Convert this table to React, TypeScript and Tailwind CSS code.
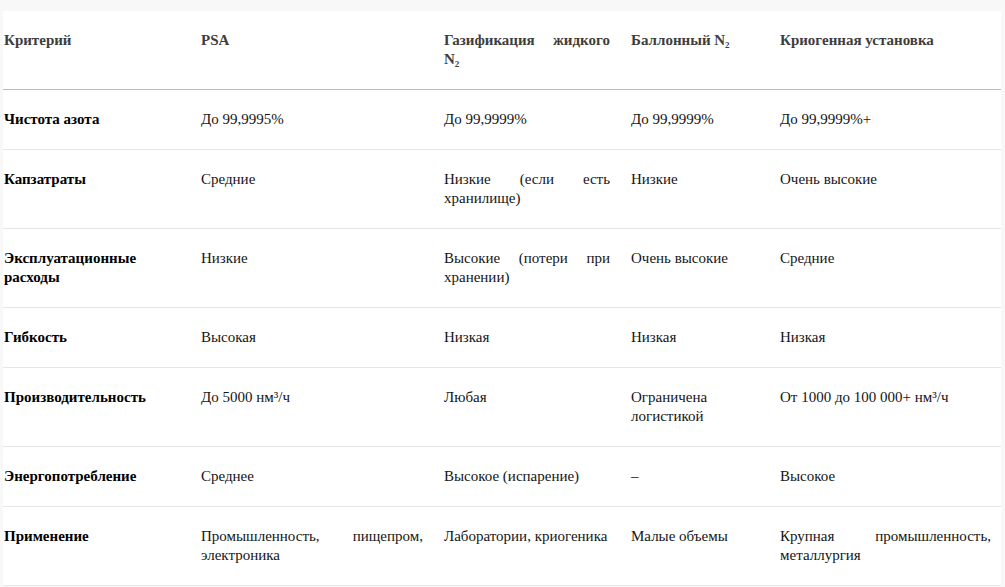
import React from "react";

const headers = ["Критерий", "PSA", "Газификация жидкого N₂", "Баллонный N₂", "Криогенная установка"];

const rows: string[][] = [
  ["Чистота азота", "До 99,9995%", "До 99,9999%", "До 99,9999%", "До 99,9999%+"],
  ["Капзатраты", "Средние", "Низкие (если есть хранилище)", "Низкие", "Очень высокие"],
  ["Эксплуатационные расходы", "Низкие", "Высокие (потери при хранении)", "Очень высокие", "Средние"],
  ["Гибкость", "Высокая", "Низкая", "Низкая", "Низкая"],
  ["Производительность", "До 5000 нм³/ч", "Любая", "Ограничена логистикой", "От 1000 до 100 000+ нм³/ч"],
  ["Энергопотребление", "Среднее", "Высокое (испарение)", "–", "Высокое"],
  ["Применение", "Промышленность, пищепром, электроника", "Лаборатории, криогеника", "Малые объемы", "Крупная промышленность, металлургия"],
];

const widths = ["w-[197px]", "w-[243px]", "w-[187px]", "w-[149px]", "w-[222px]"];

export default function App() {
  return (
    <div className="min-h-[587px] w-[1005px] bg-[#f8f8f8] pt-[11px] pl-[3px] font-['Liberation_Serif','Tinos','Times_New_Roman','DejaVu_Serif',serif]">
      <table className="w-[998px] table-fixed border-collapse bg-white font-['Liberation_Serif','Tinos','Times_New_Roman','DejaVu_Serif',serif] text-[15px] leading-[19px]">
        <colgroup>
          {widths.map((w, i) => (
            <col key={i} className={w} />
          ))}
        </colgroup>
        <thead>
          <tr className="border-b border-[#bdbdbd]">
            {headers.map((h, i) => (
              <th
                key={i}
                className={`align-top py-[20px] pl-[1px] ${i === 4 ? "pr-[10px]" : "pr-[20px]"} text-justify font-bold text-[#3d3d3d]`}
              >
                {h}
              </th>
            ))}
          </tr>
        </thead>
        <tbody>
          {rows.map((r, ri) => (
            <tr key={ri} className="border-b border-[#e6e6e6]">
              {r.map((c, ci) => (
                <td
                  key={ci}
                  className={`align-top py-[20px] pl-[1px] ${ci === 4 ? "pr-[10px]" : "pr-[20px]"} text-justify ${
                    ci === 0 ? "font-bold text-black" : "text-[#151515]"
                  }`}
                >
                  {c}
                </td>
              ))}
            </tr>
          ))}
        </tbody>
      </table>
    </div>
  );
}
